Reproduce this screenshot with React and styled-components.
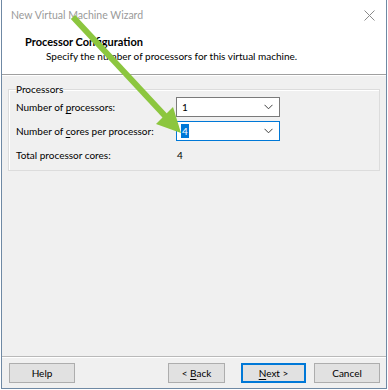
import React from "react";
import styled, { createGlobalStyle } from "styled-components";

const Global = createGlobalStyle`
  html, body { margin: 0; padding: 0; background: #ffffff; }
  body { font-family: Lato, "Noto Sans", sans-serif; font-size: 10px; color: #000; }
`;

const Window = styled.div`
  position: relative;
  box-sizing: border-box;
  margin-left: 1px;
  width: 386px;
  height: 389px;
  border: 1px solid #6f89a4;
  border-top: none;
  display: flex;
  flex-direction: column;
  background: #f0f0f0;
`;

const TitleBar = styled.div`
  height: 30px;
  background: #ffffff;
  display: flex;
  align-items: center;
  justify-content: space-between;
  padding: 0 11px 0 9px;
  color: #9a9a9a;
  font-size: 10.5px;
`;

const Header = styled.div`
  background: #ffffff;
  height: 45px;
  border-bottom: 1px solid #a0a0a0;
  box-shadow: 0 1px 0 #ffffff;
  padding: 4px 0 0 23px;
  box-sizing: border-box;
`;

const Heading = styled.div`
  font-weight: bold;
  font-size: 11px;
  line-height: 16px;
`;

const Sub = styled.div`
  line-height: 16px;
  padding-left: 21px;
  margin-top: -2px;
`;

const Body = styled.div`
  flex: 1;
  display: flex;
  flex-direction: column;
  padding: 6px 6px 0 6px;
`;

const Group = styled.fieldset`
  margin: 0;
  padding: 0 7px 5px 7px;
  border: 1px solid #dcdcdc;
  box-shadow: inset 1px 1px 0 #ffffff;
  display: grid;
  grid-template-columns: 160px 104px;
  row-gap: 4px;
  align-items: center;
`;

const Legend = styled.legend`
  padding: 0;
  line-height: 16px;
`;

const Label = styled.div`
  line-height: 20px;
  height: 20px;
  white-space: nowrap;
`;

const U = styled.span`
  text-decoration: underline;
  text-underline-offset: 2px;
`;

const Combo = styled.div`
  box-sizing: border-box;
  height: 20px;
  background: #ffffff;
  border: 1px solid ${(p) => (p.$focused ? "#0078d7" : "#7a7a7a")};
  display: flex;
  align-items: center;
  justify-content: space-between;
  padding: 0 6px 0 4px;
`;

const ComboText = styled.span`
  line-height: 14px;
  padding: 0 1px;
  background: ${(p) => (p.$selected ? "#0078d7" : "transparent")};
  color: ${(p) => (p.$selected ? "#ffffff" : "#000")};
`;

const Value = styled.div`
  line-height: 20px;
  height: 20px;
  padding-left: 1px;
`;

const Spacer = styled.div`
  flex: 1;
`;

const Footer = styled.div`
  border-top: 1px solid #b9b9b9;
  box-shadow: inset 0 1px 0 #ffffff;
  padding: 6px 6px 5px 6px;
  display: flex;
  align-items: center;
`;

const Button = styled.button`
  box-sizing: border-box;
  width: ${(p) => p.$w || 66}px;
  height: 20px;
  margin-left: ${(p) => p.$ml || 0}px;
  background: #e1e1e1;
  border: 1px solid ${(p) => (p.$default ? "#0078d7" : "#adadad")};
  box-shadow: ${(p) => (p.$default ? "inset 0 0 0 1px #0078d7" : "none")};
  font-family: inherit;
  font-size: 10px;
  color: #000;
  padding: 0;
  line-height: 16px;
`;

const ArrowLayer = styled.svg`
  position: absolute;
  left: -1px;
  top: 0;
  pointer-events: none;
`;

const Chevron = () => (
  <svg width="9" height="6" viewBox="0 0 9 6">
    <path d="M0.5 0.8 L4.5 4.8 L8.5 0.8" fill="none" stroke="#404040" strokeWidth="1" />
  </svg>
);

const CloseIcon = () => (
  <svg width="11" height="11" viewBox="0 0 11 11">
    <path d="M0.5 0.5 L10.5 10.5 M10.5 0.5 L0.5 10.5" stroke="#8a8a8a" strokeWidth="1" />
  </svg>
);

export default function App() {
  return (
    <>
      <Global />
      <Window>
        <TitleBar>
          <span>New Virtual Machine Wizard</span>
          <CloseIcon />
        </TitleBar>
        <Header>
          <Heading>Processor Configuration</Heading>
          <Sub>Specify the number of processors for this virtual machine.</Sub>
        </Header>
        <Body>
          <Group>
            <Legend>Processors</Legend>
            <Label>
              Number of <U>p</U>rocessors:
            </Label>
            <Combo>
              <ComboText>1</ComboText>
              <Chevron />
            </Combo>
            <Label>
              Number of <U>c</U>ores per processor:
            </Label>
            <Combo $focused>
              <ComboText $selected>4</ComboText>
              <Chevron />
            </Combo>
            <Label>Total processor cores:</Label>
            <Value>4</Value>
          </Group>
          <Spacer />
        </Body>
        <Footer>
          <Button $w={66} $ml={1}>Help</Button>
          <Spacer />
          <Button $w={57}>
            &lt; <U>B</U>ack
          </Button>
          <Button $w={65} $ml={16} $default>
            <U>N</U>ext &gt;
          </Button>
          <Button $w={66} $ml={8}>Cancel</Button>
        </Footer>
        <ArrowLayer width="388" height="390" viewBox="0 0 388 390">
          <line x1="72" y1="17" x2="166" y2="118" stroke="#8cc63f" strokeWidth="6" strokeLinecap="butt" />
          <polygon points="180,133 155,124 172,107" fill="#8cc63f" />
        </ArrowLayer>
      </Window>
    </>
  );
}
